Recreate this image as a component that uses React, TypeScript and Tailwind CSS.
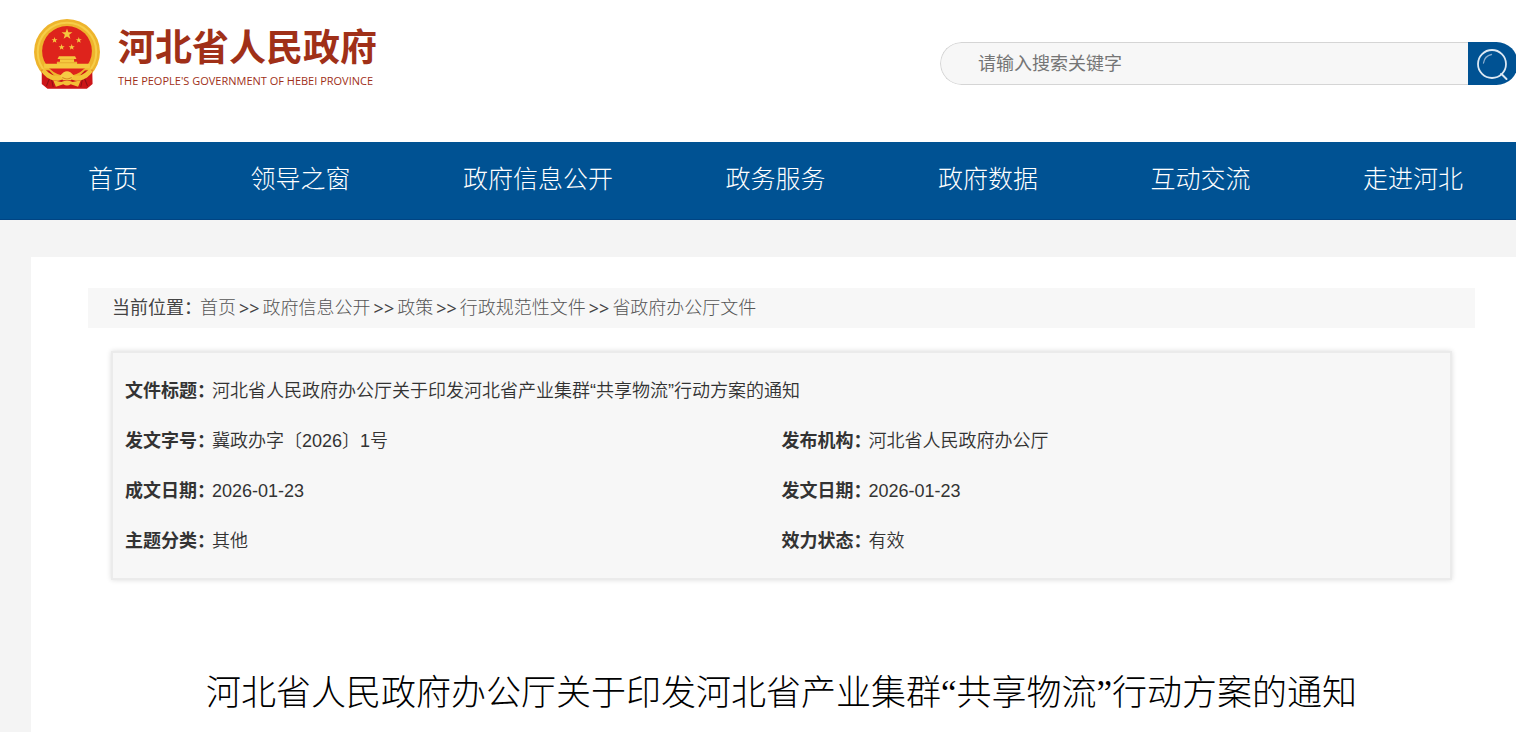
const navItems = [
  "首页",
  "领导之窗",
  "政府信息公开",
  "政务服务",
  "政府数据",
  "互动交流",
  "走进河北",
];

const crumbs = [
  "首页",
  "政府信息公开",
  "政策",
  "行政规范性文件",
  "省政府办公厅文件",
];

const rows = [
  ["发文字号：", "冀政办字〔2026〕1号", "发布机构：", "河北省人民政府办公厅"],
  ["成文日期：", "2026-01-23", "发文日期：", "2026-01-23"],
  ["主题分类：", "其他", "效力状态：", "有效"],
];

const docTitle = "河北省人民政府办公厅关于印发河北省产业集群“共享物流”行动方案的通知";

function Emblem() {
  const star = "0,-10 2.4,-3.2 9.5,-3.1 3.8,1.2 5.9,8.1 0,4 -5.9,8.1 -3.8,1.2 -9.5,-3.1 -2.4,-3.2";
  return (
    <svg viewBox="2 2 196 208" className="h-[70px] w-[66px]" aria-hidden="true">
      <circle cx="100" cy="100" r="98" fill="#eeb42c" />
      <circle cx="100" cy="100" r="87" fill="none" stroke="#f6cd48" strokeWidth="6" />
      <circle cx="100" cy="97" r="74" fill="#de231c" />
      <g fill="#f5c83f">
        <polygon points={star} transform="translate(100 47) scale(1.7)" />
        <polygon points={star} transform="translate(63 65) scale(.95)" />
        <polygon points={star} transform="translate(135 65) scale(.95)" />
        <polygon points={star} transform="translate(84 86) scale(.95)" />
        <polygon points={star} transform="translate(114 86) scale(.95)" />
        <path d="M76 113h48l4 8H72z" />
        <path d="M79 120h42v9h9v6h38v14H32v-14h38v-6h9z" />
      </g>
      <path d="M79 122h42M70 132h60" stroke="#e09a26" strokeWidth="2" />
      <path d="M25 153l22 2 20 20h66l20-20 22-2 1 42-17 14H42l-17-14z" fill="#cc1518" />
      <path d="M33 161l16 15-10 25M167 161l-16 15 10 25M53 176l6 28M147 176l-6 28" fill="none" stroke="#8f1014" strokeWidth="3" />
      <path d="M32 147c18 25 42 30 60 17q8-7 16 0c18 13 42 8 60-17l8 12c-21 29-48 31-65 21q-11-6-22 0c-17 10-44 8-65-21z" fill="#f3c238" />
      <path d="M80 170q20-26 40 0l-8 14H88z" fill="#f6cb45" />
      <path d="M59 184l24 5q17-9 34 0l24-5-8 19-22-7q-11 7-22 0l-22 7z" fill="#f3bf37" />
      <path d="M86 176q14 8 28 0" fill="none" stroke="#d98a22" strokeWidth="3" />
    </svg>
  );
}

function SearchIcon() {
  return (
    <svg viewBox="0 0 34 34" className="h-[34px] w-[34px]" fill="none" stroke="#dce8f3" strokeLinecap="round" aria-hidden="true">
      <circle cx="16" cy="17" r="14" strokeWidth="1.8" />
      <path d="M25 27l1.500 1 4 4" strokeWidth="2" />
      <path d="M7.500 16q1-7 8-8.500" stroke="#86abcd" strokeWidth="1.300" />
    </svg>
  );
}

export default function App() {
  return (
    <div className="flex min-h-screen flex-col overflow-hidden bg-[#f4f4f4] font-['Liberation_Sans','Noto_Sans_CJK_SC',sans-serif] text-lg text-[#333]">
      <header className="flex h-[142px] shrink-0 items-start justify-between bg-white pl-[34px]">
        <a href="#" className="flex pt-[19px] text-[#a03018]">
          <Emblem />
          <span className="ml-[18px] pt-1.5 whitespace-nowrap">
            <span className="block text-[37px]/[48px] font-bold">河北省人民政府</span>
            <span className="block font-['Open_Sans',sans-serif] text-[11px]/[16px] font-medium">
              THE PEOPLE'S GOVERNMENT OF HEBEI PROVINCE
            </span>
          </span>
        </a>
        <form className="mt-[42px] -mr-0.5 flex h-[43px] w-[578px] shrink-0 overflow-hidden rounded-full">
          <input
            type="text"
            aria-label="请输入搜索关键字"
            placeholder="请输入搜索关键字"
            className="min-w-0 flex-1 rounded-l-full border border-r-0 border-[#d5d5d5] bg-[#f7f7f7] pl-[37px] outline-none placeholder:text-[#757575]"
          />
          <button type="button" aria-label="搜索" className="flex w-[50px] items-center bg-[#005293] pl-2">
            <SearchIcon />
          </button>
        </form>
      </header>

      <nav className="flex h-[78px] shrink-0 justify-between border-b border-[#004483] bg-[#005293] pr-[53px] pl-[88px]">
        {navItems.map((item) => (
          <a key={item} href="#" className="text-[25px]/[75px] font-light whitespace-nowrap text-white">
            {item}
          </a>
        ))}
      </nav>

      <main className="mt-[37px] ml-[31px] flex-1 bg-white pt-[31px] pr-[41px] pl-[57px]">
        <div className="flex h-10 items-center bg-[#f7f7f7] pl-6 whitespace-nowrap text-[#444]">
          <span className="w-[88px]">当前位置：</span>
          <div className="flex gap-[3px]">
            {crumbs.map((crumb, i) => (
              <span key={crumb} className="flex gap-[3px]">
                {i > 0 && <span className="font-['Noto_Sans',sans-serif]">&gt;&gt;</span>}
                <a href="#" className="font-light text-[#555]">
                  {crumb}
                </a>
              </span>
            ))}
          </div>
        </div>

        <div className="mx-[23px] mt-[23px] border-2 border-[#ebebeb] bg-[#f7f7f7] px-3 pt-[13px] pb-3 shadow-[0_0_5px_#ddd]">
          <table className="w-full table-fixed text-left whitespace-nowrap">
            <colgroup>
              <col className="w-[87px]" />
              <col />
              <col className="w-[87px]" />
              <col />
            </colgroup>
            <tbody>
              <tr className="h-[50px]">
                <th scope="row">文件标题：</th>
                <td colSpan={3} className="font-[350]">{docTitle}</td>
              </tr>
              {rows.map((row) => (
                <tr key={row[0]} className="h-[50px]">
                  <th scope="row">{row[0]}</th>
                  <td className="font-[350]">{row[1]}</td>
                  <th scope="row">{row[2]}</th>
                  <td className="font-[350]">{row[3]}</td>
                </tr>
              ))}
            </tbody>
          </table>
        </div>

        <h1 className="mt-[84px] text-center font-['Liberation_Serif','Noto_Sans_CJK_SC',serif] text-[35px]/[60px] font-light whitespace-nowrap text-black">
          {docTitle}
        </h1>
      </main>
    </div>
  );
}
